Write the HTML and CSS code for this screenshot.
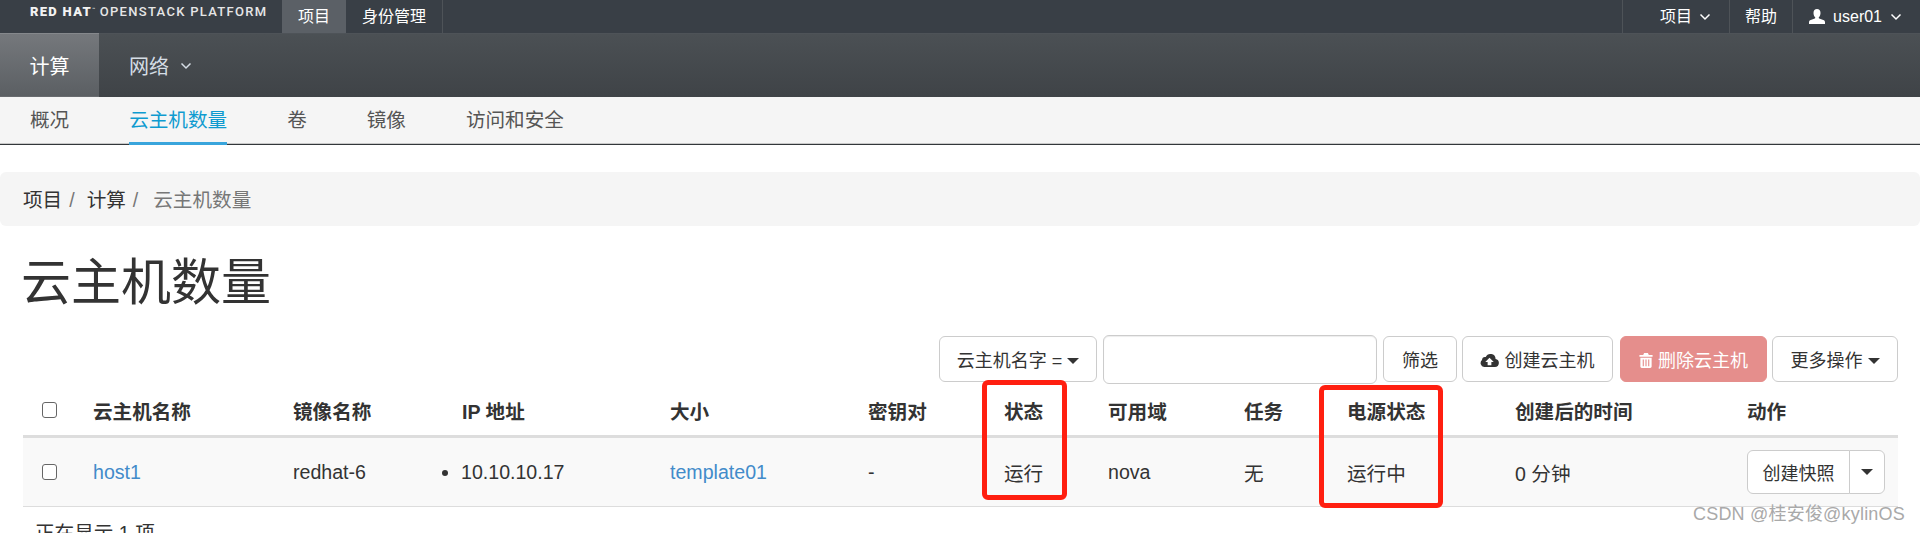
FILE: index.html
```html
<!DOCTYPE html>
<html lang="zh-CN">
<head>
    <meta charset="UTF-8">
    <title>云主机数量</title>
    <link rel="stylesheet" href="styles.css">
</head>
<body>
    <header class="topbar">
        <div class="brand"><b>RED HAT</b><sup>&#8482;</sup> OPENSTACK PLATFORM</div>
        <a class="top-link active" href="#">项目</a>
        <a class="top-link last" href="#">身份管理</a>
        <div class="top-right">
            <a class="top-link project" href="#">项目
                <svg class="chevron" viewBox="0 0 12 8"><path d="M1.5 1.5 6 6l4.500-4.500"/></svg>
            </a>
            <a class="top-link help" href="#">帮助</a>
            <a class="top-link user" href="#">
                <svg class="user-icon" viewBox="0 0 16 16"><path d="M8 0c2.200 0 3.500 1.600 3.500 3.900 0 1.700-.7 3.300-1.600 4.300-.3.400-.2 1 .3 1.200l4.100 1.700c1 .4 1.700 1.100 1.700 2.100V15H0v-1.800c0-1 .7-1.700 1.700-2.100l4.100-1.700c.5-.2.600-.8.300-1.200-.9-1-1.600-2.600-1.600-4.300C4.500 1.600 5.800 0 8 0z"/></svg>
                user01
                <svg class="chevron" viewBox="0 0 12 8"><path d="M1.500 1.500 6 6l4.500-4.500"/></svg>
            </a>
        </div>
    </header>

    <nav class="subnav">
        <a class="sub-link active" href="#">计算</a>
        <a class="sub-link" href="#">网络
            <svg class="chevron" viewBox="0 0 12 8"><path d="M1.500 1.500 6 6l4.500-4.500"/></svg>
        </a>
    </nav>

    <nav class="tabs">
        <a href="#">概况</a>
        <a class="active" href="#">云主机数量</a>
        <a href="#">卷</a>
        <a href="#">镜像</a>
        <a href="#">访问和安全</a>
    </nav>

    <ol class="breadcrumb">
        <li><a href="#">项目</a></li>
        <li><a href="#">计算</a></li>
        <li class="current">云主机数量</li>
    </ol>

    <main class="content">
        <h1>云主机数量</h1>

        <div class="toolbar">
            <button class="btn filter-field">云主机名字 = <span class="caret"></span></button>
            <input class="filter-input" type="text">
            <button class="btn filter-btn">筛选</button>
            <button class="btn create-btn">
                <svg class="btn-icon" viewBox="0 0 20 16"><path d="M16.500 6.300A5.500 5.500 0 0 0 6 4.300 3.500 3.500 0 0 0 2 7.500 4.300 4.300 0 0 0 4.300 15h11.500a4.400 4.400 0 0 0 .7-8.700zM12 9.500v3.500H8V9.500H5.500L10 5l4.500 4.500H12z"/></svg>
                创建云主机
            </button>
            <button class="btn delete-btn">
                <svg class="btn-icon" viewBox="0 0 14 16"><path d="M5 0h4l1 2h4v2H0V2h4zM1 5h12v9.500c0 .8-.7 1.500-1.500 1.500h-9C1.700 16 1 15.300 1 14.500zm2.500 2v7h1.200V7zm2.900 0v7h1.200V7zm2.900 0v7h1.200V7z"/></svg>
                删除云主机
            </button>
            <button class="btn more-btn">更多操作 <span class="caret"></span></button>
        </div>

        <table class="instances">
            <colgroup>
                <col class="c-check">
                <col class="c-name">
                <col class="c-image">
                <col class="c-ip">
                <col class="c-size">
                <col class="c-key">
                <col class="c-status">
                <col class="c-az">
                <col class="c-task">
                <col class="c-power">
                <col class="c-time">
                <col class="c-action">
            </colgroup>
            <thead>
                <tr>
                    <th><span class="check"></span></th>
                    <th>云主机名称</th>
                    <th>镜像名称</th>
                    <th>IP 地址</th>
                    <th>大小</th>
                    <th>密钥对</th>
                    <th>状态</th>
                    <th>可用域</th>
                    <th>任务</th>
                    <th>电源状态</th>
                    <th>创建后的时间</th>
                    <th>动作</th>
                </tr>
            </thead>
            <tbody>
                <tr>
                    <td><span class="check"></span></td>
                    <td><a href="#">host1</a></td>
                    <td>redhat-6</td>
                    <td><ul class="ip-list"><li>10.10.10.17</li></ul></td>
                    <td><a href="#">template01</a></td>
                    <td>-</td>
                    <td>运行</td>
                    <td>nova</td>
                    <td>无</td>
                    <td>运行中</td>
                    <td>0 分钟</td>
                    <td>
                        <div class="split-btn">
                            <button class="btn snap-btn">创建快照</button>
                            <button class="btn caret-btn"><span class="caret"></span></button>
                        </div>
                    </td>
                </tr>
            </tbody>
        </table>
        <p class="count">正在显示 1 项</p>
    </main>

    <!-- red marks and watermark sit on top of the screenshot -->
    <div class="mark mark-status"></div>
    <div class="mark mark-power"></div>
    <div class="watermark">CSDN @桂安俊@kylinOS</div>
</body>
</html>
```

FILE: styles.css
```css
html, body {
    margin: 0;
    height: 533px;
    overflow: hidden;
}
body {
    position: relative;
    background: #fff;
    color: #333;
    font-family: "Liberation Sans", "Noto Sans CJK SC", sans-serif;
    font-size: 19.6px;
}
a {
    color: inherit;
    text-decoration: none;
}

/* top bar */
.topbar {
    display: flex;
    height: 33px;
    background: #393f46;
    border-bottom: 1px solid #4e5358;
    color: #fff;
    font-size: 16px;
}
.brand {
    width: 252px;
    padding: 5px 0 0 30px;
    font-family: "Roboto", sans-serif;
    font-size: 13px;
    font-weight: 500;
    line-height: 14px;
    letter-spacing: 1.3px;
    color: #e6e6e6;
    white-space: nowrap;
}
.brand b {
    color: #f2f2f2;
    font-weight: 900;
}
.brand sup {
    font-size: 5px;
    line-height: 0;
    vertical-align: 5px;
    letter-spacing: 0;
}
.top-link {
    display: flex;
    align-items: center;
    padding: 0 16px;
    line-height: 33px;
}
.top-link.active {
    background: #5b6066;
}
.top-link.last {
    border-right: 1px solid #4e5358;
}
.top-right {
    display: flex;
    margin-left: auto;
    padding-right: 18px;
}
.top-right .top-link {
    border-left: 1px solid #4e5358;
}
.top-right .project {
    gap: 7px;
    padding: 0 18px 0 37px;
}
.top-right .help {
    padding: 0 15px;
}
.top-right .user {
    gap: 8px;
    padding: 0 0 0 16px;
}
.chevron {
    width: 12px;
    height: 8px;
    fill: none;
    stroke: currentColor;
    stroke-width: 1.500;
}
.user-icon {
    width: 16px;
    height: 16px;
    fill: #fff;
}

/* second level nav */
.subnav {
    display: flex;
    height: 63px;
    background: linear-gradient(#4b5054, #3f4347);
    color: #d5dde5;
    font-size: 20px;
}
.sub-link {
    display: flex;
    align-items: center;
    gap: 11px;
    padding: 0 30px;
    white-space: nowrap;
}
.sub-link.active {
    box-sizing: border-box;
    justify-content: center;
    width: 99px;
    margin-top: -1px;
    height: 64px;
    padding: 0;
    background: linear-gradient(#75787c, #5b5f63);
    border-top: 1px solid #85888c;
    border-bottom: 1px solid #686b6f;
    color: #fff;
}

/* tabs */
.tabs {
    display: flex;
    gap: 60px;
    box-sizing: border-box;
    height: 48px;
    padding-left: 30px;
    background: #f5f5f5;
    border-bottom: 1px solid #33373b;
    box-shadow: inset 0 -1px 0 #c9c9c9;
    color: #555;
    font-size: 19.6px;
    line-height: 46px;
}
.tabs a {
    height: 45px;
}
.tabs a.active {
    color: #0f9bd0;
    border-bottom: 3px solid #39a5dc;
    height: 45px;
}

/* breadcrumb */
.breadcrumb {
    display: flex;
    gap: 12px;
    height: 54px;
    margin: 27px 0 0;
    padding: 0 0 0 23px;
    background: #f5f5f5;
    border-radius: 6px;
    list-style: none;
    line-height: 57px;
}
.breadcrumb li:not(.current)::after {
    content: "/";
    margin-left: 7px;
    color: #777;
}
.breadcrumb a {
    color: #333;
}
.breadcrumb .current {
    margin-left: 3px;
    color: #777;
}

/* page */
.content {
    padding: 0 22px 0 23px;
}
h1 {
    margin: 27px 0 0 -2px;
    font-size: 50px;
    font-weight: 400;
    line-height: 60px;
}
.toolbar {
    display: flex;
    align-items: center;
    justify-content: flex-end;
    height: 50px;
    margin-top: 21px;
    gap: 5px;
}
.btn {
    box-sizing: border-box;
    height: 46px;
    padding: 0;
    background: #fff;
    border: 1px solid #ccc;
    border-radius: 6px;
    color: #333;
    font-family: inherit;
    font-size: 18px;
}
.caret {
    display: inline-block;
    vertical-align: middle;
    margin-bottom: 2px;
    border-top: 6px solid #333;
    border-left: 6px solid transparent;
    border-right: 6px solid transparent;
}
.filter-field {
    width: 158px;
    margin-right: 1px;
}
.filter-input {
    box-sizing: border-box;
    width: 274px;
    height: 49px;
    background: #fff;
    border: 1px solid #ccc;
    border-radius: 6px;
    box-shadow: inset 0 1px 1px rgba(0, 0, 0, .075);
    margin-right: 1px;
}
.filter-btn {
    width: 74px;
}
.create-btn {
    width: 151px;
    margin-right: 2px;
}
.delete-btn {
    width: 147px;
    background: #e58e8c;
    border-color: #e58e8c;
    color: #fff;
}
.more-btn {
    width: 126px;
}
.btn-icon {
    width: 19px;
    height: 15px;
    fill: #333;
    vertical-align: -1px;
}
.delete-btn .btn-icon {
    width: 14px;
    fill: #fff;
}

/* table */
.instances {
    width: 1875px;
    table-layout: fixed;
    border-collapse: collapse;
    margin-top: 1px;
}
.c-check { width: 70px; }
.c-name { width: 200px; }
.c-image { width: 169px; }
.c-ip { width: 208px; }
.c-size { width: 198px; }
.c-key { width: 136px; }
.c-status { width: 104px; }
.c-az { width: 136px; }
.c-task { width: 103px; }
.c-power { width: 168px; }
.c-time { width: 232px; }
.c-action { width: 151px; }
.instances th {
    height: 50px;
    padding: 0;
    border-bottom: 3px solid #ddd;
    font-weight: 700;
    text-align: left;
}
.instances td {
    height: 68px;
    padding: 0;
    background: #f9f9f9;
    border-bottom: 1px solid #ddd;
}
.instances td a {
    color: #428bca;
}
.check {
    display: block;
    box-sizing: border-box;
    width: 15px;
    height: 16px;
    margin-left: 19px;
    background: #fff;
    border: 1.500px solid #666;
    border-radius: 3px;
}
.ip-list {
    margin: 0 0 0 -1px;
    padding: 0;
    list-style: disc;
}
.split-btn {
    display: flex;
}
.snap-btn {
    width: 103px;
    height: 44px;
    border-radius: 6px 0 0 6px;
}
.caret-btn {
    width: 36px;
    height: 44px;
    margin-left: -1px;
    border-radius: 0 6px 6px 0;
}
.count {
    margin: 14px 0 0 12px;
    line-height: 24px;
}

/* overlays */
.mark {
    position: absolute;
    box-sizing: border-box;
    border: 5px solid #ff1f10;
    border-radius: 6px;
}
.mark-status {
    left: 982px;
    top: 380px;
    width: 85px;
    height: 120px;
}
.mark-power {
    left: 1319px;
    top: 385px;
    width: 124px;
    height: 123px;
}
.watermark {
    position: absolute;
    left: 1693px;
    top: 502px;
    color: #a9a9a9;
    font-size: 18px;
    letter-spacing: .2px;
    line-height: 24px;
    white-space: nowrap;
}
```
